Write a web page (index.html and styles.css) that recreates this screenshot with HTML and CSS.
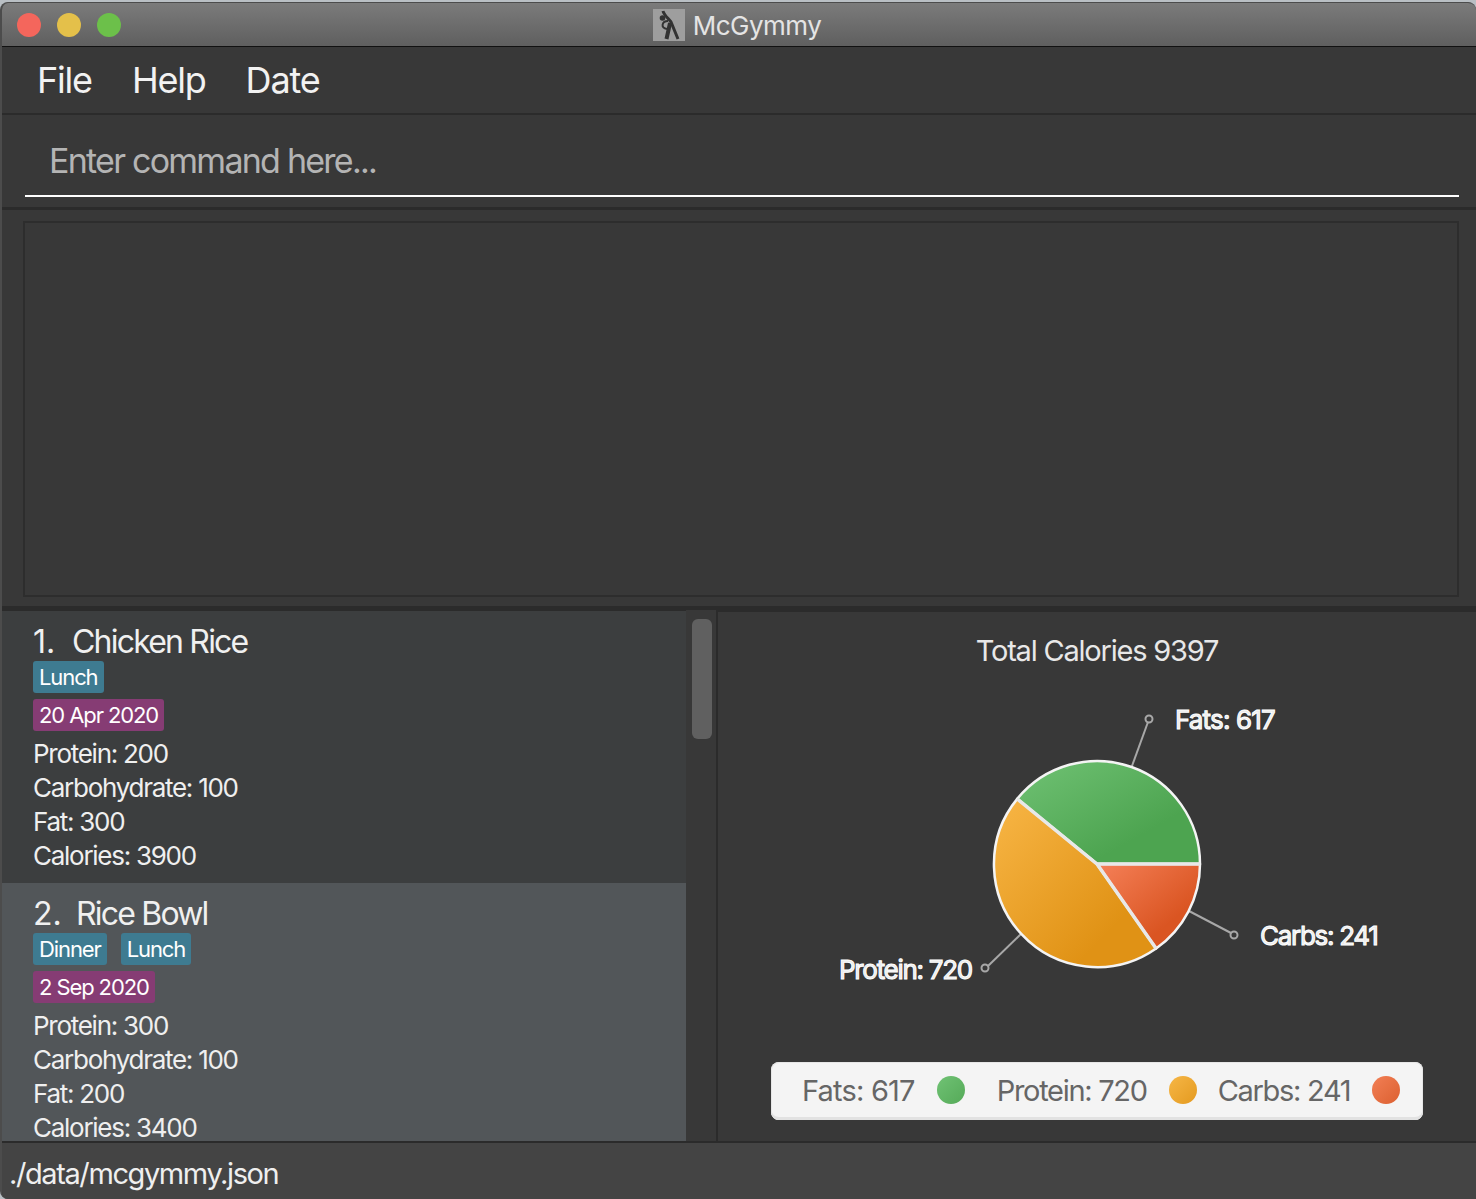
FILE: index.html
```html
<!DOCTYPE html>
<html>

<head>
  <meta charset="utf-8">
  <title>McGymmy</title>
  <link rel="stylesheet" href="styles.css">
</head>

<body>
  <div class="window">
    <div class="titlebar">
      <div class="lights">
        <span class="light red"></span>
        <span class="light yellow"></span>
        <span class="light green"></span>
      </div>
      <div class="app-title">
        <svg class="app-icon" viewBox="0 0 32 32" width="32" height="32">
          <rect width="32" height="32" fill="#9e9e9e" />
          <circle cx="9.5" cy="9" r="2.8" fill="#333" />
          <g fill="none" stroke="#333">
            <path stroke-width="3" d="M10 2 C11 6 15 9 18 13 L25 30" />
            <path stroke-width="4" d="M17 14 L15.5 21 L13.5 30" />
            <path stroke-width="2" d="M15 12 C9 12 7 19 14 20" />
          </g>
        </svg>
        <span>McGymmy</span>
      </div>
    </div>

    <div class="menubar">
      <span>File</span>
      <span>Help</span>
      <span>Date</span>
    </div>

    <div class="command">
      <div class="command-input">Enter command here...</div>
    </div>

    <div class="result">
      <div class="result-box"></div>
    </div>

    <div class="main">
      <div class="list">
        <div class="cell">
          <div class="cell-title"><span class="idx">1.</span>Chicken Rice</div>
          <div class="tags"><span class="tag">Lunch</span></div>
          <div class="tags"><span class="tag date">20 Apr 2020</span></div>
          <div class="field">Protein: 200</div>
          <div class="field">Carbohydrate: 100</div>
          <div class="field">Fat: 300</div>
          <div class="field">Calories: 3900</div>
        </div>
        <div class="cell selected">
          <div class="cell-title"><span class="idx">2.</span>Rice Bowl</div>
          <div class="tags"><span class="tag">Dinner</span><span class="tag">Lunch</span></div>
          <div class="tags"><span class="tag date">2 Sep 2020</span></div>
          <div class="field">Protein: 300</div>
          <div class="field">Carbohydrate: 100</div>
          <div class="field">Fat: 200</div>
          <div class="field">Calories: 3400</div>
        </div>
      </div>
      <div class="scroll">
        <div class="thumb"></div>
      </div>
      <div class="chart">
        <div class="chart-title">Total Calories 9397</div>
        <svg class="pie" viewBox="718 690 758 300" width="758" height="300">
          <defs>
            <linearGradient id="gGreen" x1="0" y1="0" x2="1" y2="1">
              <stop offset="0" stop-color="#70c274" />
              <stop offset="0.7" stop-color="#4da450" />
            </linearGradient>
            <linearGradient id="gOrange" x1="0" y1="0" x2="1" y2="1">
              <stop offset="0" stop-color="#f8b646" />
              <stop offset="0.75" stop-color="#e09215" />
            </linearGradient>
            <linearGradient id="gRed" x1="0" y1="0" x2="1" y2="1">
              <stop offset="0" stop-color="#f58058" />
              <stop offset="0.7" stop-color="#da5522" />
            </linearGradient>
          </defs>

          <g class="lead">
            <line x1="1132" y1="766" x2="1148" y2="722" />
            <circle cx="1149" cy="719" r="3.5" />
            <line x1="1189" y1="911" x2="1231" y2="933" />
            <circle cx="1234" cy="935" r="3.5" />
            <line x1="1021" y1="934" x2="988" y2="966" />
            <circle cx="985" cy="968" r="3.5" />
          </g>

          <g class="slices">
            <path d="M1097 864 L1200 864 A103 103 0 0 0 1017.2 798.9 Z" fill="url(#gGreen)" />
            <path d="M1097 864 L1017.2 798.9 A103 103 0 0 0 1156.1 948.4 Z" fill="url(#gOrange)" />
            <path d="M1097 864 L1156.1 948.4 A103 103 0 0 0 1200 864 Z" fill="url(#gRed)" />
          </g>
          <path class="spokes" d="M1200 864 L1097 864 L1017.2 798.9 M1097 864 L1156.1 948.4" />

          <text class="pie-label fats" x="1175" y="729">Fats: 617</text>
          <text class="pie-label" x="1260" y="945">Carbs: 241</text>
          <text class="pie-label" x="839" y="979">Protein: 720</text>
        </svg>
        <div class="legend">
          <span class="legend-item">Fats: 617<i class="dot dot-green"></i></span>
          <span class="legend-item">Protein: 720<i class="dot dot-orange"></i></span>
          <span class="legend-item">Carbs: 241<i class="dot dot-red"></i></span>
        </div>
      </div>
    </div>

    <div class="status">./data/mcgymmy.json</div>
  </div>
</body>

</html>
```

FILE: styles.css
```css
html,
body {
  margin: 0;
  height: 100%;
  overflow: hidden;
  background: #b9bfc4;
}

body {
  font-family: "Inter", "Liberation Sans", sans-serif;
  color: #eeeeee;
}

.window {
  width: 1476px;
  height: 1197px;
  margin-top: 2px;
  display: flex;
  flex-direction: column;
  background: #383838;
  border-left: 2px solid #4c4c4c;
  border-top: 1px solid #4c4c4c;
  box-sizing: border-box;
  border-radius: 8px 8px 0 8px;
  overflow: hidden;
}

/* title bar */
.titlebar {
  height: 43px;
  flex: none;
  position: relative;
  background: linear-gradient(#7b7b7b, #5f5f5f);
  border-bottom: 1px solid #111;
  display: flex;
  align-items: center;
  justify-content: center;
}

.lights {
  position: absolute;
  left: 15px;
  top: 10px;
  display: flex;
  gap: 16px;
}

.light {
  width: 24px;
  height: 24px;
  border-radius: 50%;
}

.red { background: #f4665c; }
.yellow { background: #e4c04a; }
.green { background: #6cc04a; }

.app-title {
  display: flex;
  align-items: center;
  gap: 8px;
  font-size: 26px;
  letter-spacing: -0.5px;
  color: #e4e4e4;
  margin-left: -4px;
}

.app-title span {
  padding-top: 2px;
}

.app-icon {
  display: block;
}

/* menu */
.menubar {
  height: 66px;
  flex: none;
  display: flex;
  align-items: center;
  gap: 40px;
  padding-left: 35px;
  font-size: 36px;
  letter-spacing: -1.2px;
  color: #f2f2f2;
  border-bottom: 2px solid #2b2b2b;
}

/* command box */
.command {
  height: 95px;
  flex: none;
  padding: 0 17px 0 23px;
  box-sizing: border-box;
  border-bottom: 3px solid #2b2b2b;
}

.command-input {
  height: 82px;
  box-sizing: border-box;
  border-bottom: 2px solid #fff;
  padding: 26px 0 0 24px;
  font-size: 34px;
  line-height: 40px;
  letter-spacing: -1.75px;
  color: #b4b4b4;
}

/* result display */
.result {
  height: 400px;
  flex: none;
  padding: 11px 17px 9px 21px;
  box-sizing: border-box;
  border-bottom: 4px solid #2b2b2b;
}

.result-box {
  height: 100%;
  box-sizing: border-box;
  border: 2px solid #2d2d2d;
  background: #383838;
}

.main {
  height: 533px;
  flex: none;
  box-sizing: border-box;
  display: flex;
  border-bottom: 2px solid #2b2b2b;
}

/* meal list */
.list {
  width: 684px;
  flex: none;
  padding-top: 1px;
  box-sizing: border-box;
  background: #2b2b2b;
}

.cell {
  height: 272px;
  box-sizing: border-box;
  padding: 13px 0 0 31px;
  background: #3c3e3f;
}

.cell.selected {
  height: 258px;
  background: #525659;
}

.cell-title {
  font-size: 32px;
  line-height: 36px;
  letter-spacing: -1.8px;
  color: #f0f0f0;
}

.idx {
  display: inline-block;
  width: 39px;
  letter-spacing: 0;
}

.selected .idx {
  width: 43px;
}

.tags {
  display: flex;
  gap: 14px;
  margin: 1px 0 6px;
}

.tag {
  height: 32px;
  line-height: 32px;
  padding: 0 6px;
  border-radius: 3px;
  background: #3e7b91;
  color: #fff;
  font-size: 22px;
  letter-spacing: -1.1px;
}

.tag.date {
  background: #863c74;
}

.field {
  font-size: 26px;
  line-height: 34px;
  letter-spacing: -1.27px;
  color: #efefef;
}

/* scrollbar */
.scroll {
  width: 32px;
  flex: none;
  box-sizing: border-box;
  padding: 9px 4px 0 6px;
  background: #383838;
  border-right: 2px solid #2b2b2b;
}

.thumb {
  height: 120px;
  border-radius: 6px;
  background: #606060;
}

/* chart */
.chart {
  flex: 1;
  display: flex;
  flex-direction: column;
  align-items: center;
  border-top: 2px solid #2b2b2b;
}

.chart-title {
  font-size: 29px;
  line-height: 36px;
  margin-top: 21px;
  letter-spacing: -1.2px;
  color: #e8e8e8;
}

.pie {
  display: block;
  margin-top: 21px;
}

.slices path {
  stroke: #f4f4f4;
  stroke-width: 2.5;
  stroke-linejoin: round;
}

.spokes {
  fill: none;
  stroke: #e8e8e8;
  stroke-width: 3.5;
}

.lead line,
.lead circle {
  stroke: #a8a8a8;
  stroke-width: 2;
  fill: none;
}

.pie-label {
  font-size: 26px;
  font-family: "Inter", "Liberation Sans", sans-serif;
  letter-spacing: -1.3px;
  fill: #eaeaea;
  stroke: #ffffff;
  stroke-width: 1;
}

.pie-label.fats {
  letter-spacing: -0.85px;
}

.legend {
  width: 652px;
  height: 58px;
  margin-top: 72px;
  box-sizing: border-box;
  padding: 0 0 2px 31px;
  display: flex;
  align-items: center;
  gap: 31px;
  background: #f4f4f4;
  border-radius: 8px;
  box-shadow: inset 0 -3px 0 #e2e2e2, inset 0 0 0 1px #e6e6e6;
  color: #666666;
  font-size: 29px;
  letter-spacing: -1.3px;
}

.legend-item {
  display: flex;
  align-items: center;
  gap: 22px;
}

.legend-item:first-child {
  letter-spacing: -0.8px;
  margin-right: 1px;
}

.legend-item:last-child {
  margin-left: -10px;
}

.dot {
  width: 28px;
  height: 28px;
  border-radius: 50%;
}

.dot-green { background: linear-gradient(135deg, #70c274, #55aa58); }
.dot-orange { background: linear-gradient(135deg, #f6b646, #e49a20); }
.dot-red { background: linear-gradient(135deg, #f27f55, #dc6030); }

/* status bar */
.status {
  flex: 1;
  position: relative;
  background: #444444;
  padding: 13px 0 0 7px;
  font-size: 29px;
  line-height: 36px;
  letter-spacing: -1.4px;
  color: #efefef;
}
```
